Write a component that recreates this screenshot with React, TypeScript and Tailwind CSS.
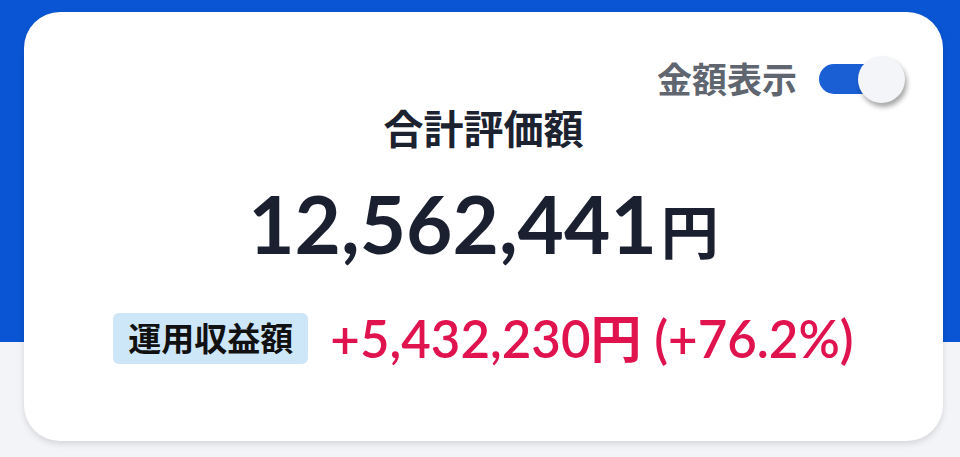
import { useState } from "react"

const font = { fontFamily: 'Lato, "Noto Sans CJK JP", sans-serif' }

export default function App() {
  const [showAmount, setShowAmount] = useState(true)

  return (
    <div
      className="w-[960px] h-[457px] bg-[linear-gradient(to_bottom,#0a55d3_342px,#f3f4f8_342px)] pt-3 pl-6 pr-[17px]"
      style={font}
    >
      <div className="h-[429px] bg-white rounded-[36px] shadow-[0_3px_6px_rgba(0,0,0,0.12)] flex flex-col items-center pt-[43px]">
        <div className="self-stretch flex justify-end items-center gap-[22px] pr-[38px] h-[48px]">
          <span className="text-[35px] font-bold text-[#5f6670] leading-none">金額表示</span>
          <button
            onClick={() => setShowAmount(!showAmount)}
            className="relative w-[86px] h-[48px] flex items-center"
          >
            <span className="block w-[64px] h-[30px] rounded-full bg-[#1a5fd4]" />
            <span className="absolute right-0 top-[1px] w-[47px] h-[47px] rounded-full bg-[#f4f5f8] shadow-[2px_4px_5px_rgba(0,0,0,0.35)]" />
          </button>
        </div>

        <h1 className="mt-[2px] text-[40px] font-bold text-[#1c2230] leading-[48px]">合計評価額</h1>

        <div className="mt-[30px] flex items-baseline text-[#1a2030] font-bold leading-none">
          <span className="text-[80px]">12,562,441</span>
          <span className="text-[58px] ml-1">円</span>
        </div>

        <div className="mt-[50px] flex items-center gap-[22px]">
          <span className="bg-[#cde7f8] rounded-[6px] px-[15px] h-[51px] flex items-center text-[33px] font-bold text-[#111] leading-none">運用収益額</span>
          <span className="text-[51px] font-semibold text-[#e0134f] leading-none">
            +5,432,230<span className="font-bold">円</span> (+76.2%)
          </span>
        </div>
      </div>
    </div>
  )
}
